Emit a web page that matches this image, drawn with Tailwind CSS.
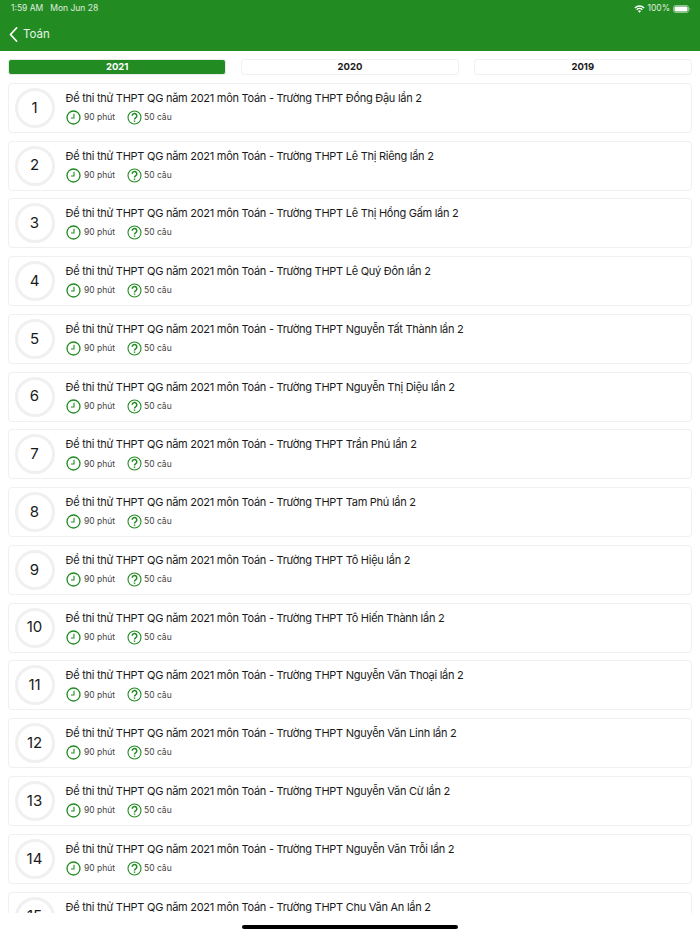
<!DOCTYPE html>
<html><head><meta charset="utf-8"><script src="https://cdn.jsdelivr.net/npm/@tailwindcss/browser@4"></script></head>
<body class="bg-white">
<svg class="hidden" width="0" height="0"><defs>
<symbol id="clock" viewBox="0 0 15 15"><circle cx="7.500" cy="7.500" r="6.500" fill="none" stroke="#228b22" stroke-width="1.300"/><path d="M8 3.800V8H5" fill="none" stroke="#228b22" stroke-width="1.100"/></symbol>
<symbol id="quest" viewBox="0 0 15 15"><circle cx="7.500" cy="7.500" r="6.500" fill="none" stroke="#228b22" stroke-width="1.100"/><path d="M5.200 5.800a2.300 2.300 0 1 1 3.600 1.900c-.9.600-1.300 1-1.300 1.900M7.500 10.400v1.400" fill="none" stroke="#228b22" stroke-width="1.500"/></symbol>
</defs></svg>
<div class="relative w-[700px] h-[934px] overflow-hidden bg-white font-['Inter','Liberation_Sans',sans-serif] text-[#1a1a1a]">
<header class="h-[51px] bg-[#228b22] text-white">
<div class="h-[17px] flex items-center justify-between pl-[11px] pr-[9px] text-[8.500px] text-white/85">
<div class="flex gap-[7px]"><span>1:59 AM</span><span>Mon Jun 28</span></div>
<div class="flex items-center gap-[2px]">
<svg class="w-[11px] h-[8px]" viewBox="0 0 12 9"><path d="M6 8.600 4.300 6.800a2.400 2.400 0 0 1 3.400 0zM3.300 5.800 2.300 4.700a5.200 5.200 0 0 1 7.400 0l-1 1.100a3.800 3.800 0 0 0-5.400 0zM1.300 3.800.3 2.700a8 8 0 0 1 11.400 0l-1 1.100a6.600 6.600 0 0 0-9.400 0z" fill="#fff"/></svg>
<span>100%</span>
<svg class="w-[18px] h-[8px] ml-[1px]" viewBox="0 0 18 8"><rect x=".5" y=".5" width="15" height="7" rx="2" fill="none" stroke="#fff" stroke-opacity=".5"/><rect x="1.500" y="1.500" width="13" height="5" rx="1" fill="#fff"/><path d="M16.500 2.500v3c.5-.2.9-.8.9-1.500s-.4-1.300-.9-1.500z" fill="#fff" fill-opacity=".5"/></svg>
</div>
</div>
<div class="h-[34px] flex items-center pl-[9px] gap-[5px]">
<svg class="w-[9px] h-[15px]" viewBox="0 0 9 15"><path d="M7.500 1 1.500 7.500l6 6.500" fill="none" stroke="#fff" stroke-width="1.800" stroke-linecap="round" stroke-linejoin="round"/></svg>
<span class="text-[11.500px] text-white/90 pt-[2px]">Toán</span>
</div>
</header>
<main class="h-[862px] overflow-hidden px-[8px]">
<nav class="flex gap-[14.500px] pt-[7.500px] pb-[8.300px]">
<div class="flex-1 h-[16px] rounded-[3px] bg-[#228b22] border border-[#e6ece6] flex items-center justify-center pt-[1.500px] text-[9.500px] font-bold text-white">2021</div>
<div class="flex-1 h-[16px] rounded-[3px] bg-white border-[1.500px] border-[#f1f1f1] flex items-center justify-center pt-[1.500px] text-[9.500px] font-bold">2020</div>
<div class="flex-1 h-[16px] rounded-[3px] bg-white border-[1.500px] border-[#f1f1f1] flex items-center justify-center pt-[1.500px] text-[9.500px] font-bold">2019</div>
</nav>
<ul class="flex flex-col gap-[7.770px]">
<li class="h-[50px] shrink-0 rounded-[4px] border-[1.500px] border-[#f0f0f0] flex items-center pl-[5.500px]"><div class="w-[40px] h-[40px] rounded-full border-[3px] border-[#f0f0f0] flex items-center justify-center text-[15px] shrink-0">1</div><div class="ml-[11px]"><p class="text-[11px] leading-[14px] tracking-[-0.27px] whitespace-nowrap">Đề thi thử THPT QG năm 2021 môn Toán - Trường THPT Đồng Đậu lần 2</p><div class="mt-[5px] flex items-center h-[15px] text-[8.500px] text-[#444]"><svg class="w-[15px] h-[15px]"><use href="#clock"/></svg><span class="ml-[3.500px] w-[42.500px]">90 phút</span><svg class="w-[15px] h-[15px]"><use href="#quest"/></svg><span class="ml-[2.500px]">50 câu</span></div></div></li>
<li class="h-[50px] shrink-0 rounded-[4px] border-[1.500px] border-[#f0f0f0] flex items-center pl-[5.500px]"><div class="w-[40px] h-[40px] rounded-full border-[3px] border-[#f0f0f0] flex items-center justify-center text-[15px] shrink-0">2</div><div class="ml-[11px]"><p class="text-[11px] leading-[14px] tracking-[-0.27px] whitespace-nowrap">Đề thi thử THPT QG năm 2021 môn Toán - Trường THPT Lê Thị Riêng lần 2</p><div class="mt-[5px] flex items-center h-[15px] text-[8.500px] text-[#444]"><svg class="w-[15px] h-[15px]"><use href="#clock"/></svg><span class="ml-[3.500px] w-[42.500px]">90 phút</span><svg class="w-[15px] h-[15px]"><use href="#quest"/></svg><span class="ml-[2.500px]">50 câu</span></div></div></li>
<li class="h-[50px] shrink-0 rounded-[4px] border-[1.500px] border-[#f0f0f0] flex items-center pl-[5.500px]"><div class="w-[40px] h-[40px] rounded-full border-[3px] border-[#f0f0f0] flex items-center justify-center text-[15px] shrink-0">3</div><div class="ml-[11px]"><p class="text-[11px] leading-[14px] tracking-[-0.27px] whitespace-nowrap">Đề thi thử THPT QG năm 2021 môn Toán - Trường THPT Lê Thị Hồng Gấm lần 2</p><div class="mt-[5px] flex items-center h-[15px] text-[8.500px] text-[#444]"><svg class="w-[15px] h-[15px]"><use href="#clock"/></svg><span class="ml-[3.500px] w-[42.500px]">90 phút</span><svg class="w-[15px] h-[15px]"><use href="#quest"/></svg><span class="ml-[2.500px]">50 câu</span></div></div></li>
<li class="h-[50px] shrink-0 rounded-[4px] border-[1.500px] border-[#f0f0f0] flex items-center pl-[5.500px]"><div class="w-[40px] h-[40px] rounded-full border-[3px] border-[#f0f0f0] flex items-center justify-center text-[15px] shrink-0">4</div><div class="ml-[11px]"><p class="text-[11px] leading-[14px] tracking-[-0.27px] whitespace-nowrap">Đề thi thử THPT QG năm 2021 môn Toán - Trường THPT Lê Quý Đôn lần 2</p><div class="mt-[5px] flex items-center h-[15px] text-[8.500px] text-[#444]"><svg class="w-[15px] h-[15px]"><use href="#clock"/></svg><span class="ml-[3.500px] w-[42.500px]">90 phút</span><svg class="w-[15px] h-[15px]"><use href="#quest"/></svg><span class="ml-[2.500px]">50 câu</span></div></div></li>
<li class="h-[50px] shrink-0 rounded-[4px] border-[1.500px] border-[#f0f0f0] flex items-center pl-[5.500px]"><div class="w-[40px] h-[40px] rounded-full border-[3px] border-[#f0f0f0] flex items-center justify-center text-[15px] shrink-0">5</div><div class="ml-[11px]"><p class="text-[11px] leading-[14px] tracking-[-0.27px] whitespace-nowrap">Đề thi thử THPT QG năm 2021 môn Toán - Trường THPT Nguyễn Tất Thành lần 2</p><div class="mt-[5px] flex items-center h-[15px] text-[8.500px] text-[#444]"><svg class="w-[15px] h-[15px]"><use href="#clock"/></svg><span class="ml-[3.500px] w-[42.500px]">90 phút</span><svg class="w-[15px] h-[15px]"><use href="#quest"/></svg><span class="ml-[2.500px]">50 câu</span></div></div></li>
<li class="h-[50px] shrink-0 rounded-[4px] border-[1.500px] border-[#f0f0f0] flex items-center pl-[5.500px]"><div class="w-[40px] h-[40px] rounded-full border-[3px] border-[#f0f0f0] flex items-center justify-center text-[15px] shrink-0">6</div><div class="ml-[11px]"><p class="text-[11px] leading-[14px] tracking-[-0.27px] whitespace-nowrap">Đề thi thử THPT QG năm 2021 môn Toán - Trường THPT Nguyễn Thị Diệu lần 2</p><div class="mt-[5px] flex items-center h-[15px] text-[8.500px] text-[#444]"><svg class="w-[15px] h-[15px]"><use href="#clock"/></svg><span class="ml-[3.500px] w-[42.500px]">90 phút</span><svg class="w-[15px] h-[15px]"><use href="#quest"/></svg><span class="ml-[2.500px]">50 câu</span></div></div></li>
<li class="h-[50px] shrink-0 rounded-[4px] border-[1.500px] border-[#f0f0f0] flex items-center pl-[5.500px]"><div class="w-[40px] h-[40px] rounded-full border-[3px] border-[#f0f0f0] flex items-center justify-center text-[15px] shrink-0">7</div><div class="ml-[11px]"><p class="text-[11px] leading-[14px] tracking-[-0.27px] whitespace-nowrap">Đề thi thử THPT QG năm 2021 môn Toán - Trường THPT Trần Phú lần 2</p><div class="mt-[5px] flex items-center h-[15px] text-[8.500px] text-[#444]"><svg class="w-[15px] h-[15px]"><use href="#clock"/></svg><span class="ml-[3.500px] w-[42.500px]">90 phút</span><svg class="w-[15px] h-[15px]"><use href="#quest"/></svg><span class="ml-[2.500px]">50 câu</span></div></div></li>
<li class="h-[50px] shrink-0 rounded-[4px] border-[1.500px] border-[#f0f0f0] flex items-center pl-[5.500px]"><div class="w-[40px] h-[40px] rounded-full border-[3px] border-[#f0f0f0] flex items-center justify-center text-[15px] shrink-0">8</div><div class="ml-[11px]"><p class="text-[11px] leading-[14px] tracking-[-0.27px] whitespace-nowrap">Đề thi thử THPT QG năm 2021 môn Toán - Trường THPT Tam Phú lần 2</p><div class="mt-[5px] flex items-center h-[15px] text-[8.500px] text-[#444]"><svg class="w-[15px] h-[15px]"><use href="#clock"/></svg><span class="ml-[3.500px] w-[42.500px]">90 phút</span><svg class="w-[15px] h-[15px]"><use href="#quest"/></svg><span class="ml-[2.500px]">50 câu</span></div></div></li>
<li class="h-[50px] shrink-0 rounded-[4px] border-[1.500px] border-[#f0f0f0] flex items-center pl-[5.500px]"><div class="w-[40px] h-[40px] rounded-full border-[3px] border-[#f0f0f0] flex items-center justify-center text-[15px] shrink-0">9</div><div class="ml-[11px]"><p class="text-[11px] leading-[14px] tracking-[-0.27px] whitespace-nowrap">Đề thi thử THPT QG năm 2021 môn Toán - Trường THPT Tô Hiệu lần 2</p><div class="mt-[5px] flex items-center h-[15px] text-[8.500px] text-[#444]"><svg class="w-[15px] h-[15px]"><use href="#clock"/></svg><span class="ml-[3.500px] w-[42.500px]">90 phút</span><svg class="w-[15px] h-[15px]"><use href="#quest"/></svg><span class="ml-[2.500px]">50 câu</span></div></div></li>
<li class="h-[50px] shrink-0 rounded-[4px] border-[1.500px] border-[#f0f0f0] flex items-center pl-[5.500px]"><div class="w-[40px] h-[40px] rounded-full border-[3px] border-[#f0f0f0] flex items-center justify-center text-[15px] shrink-0">10</div><div class="ml-[11px]"><p class="text-[11px] leading-[14px] tracking-[-0.27px] whitespace-nowrap">Đề thi thử THPT QG năm 2021 môn Toán - Trường THPT Tô Hiến Thành lần 2</p><div class="mt-[5px] flex items-center h-[15px] text-[8.500px] text-[#444]"><svg class="w-[15px] h-[15px]"><use href="#clock"/></svg><span class="ml-[3.500px] w-[42.500px]">90 phút</span><svg class="w-[15px] h-[15px]"><use href="#quest"/></svg><span class="ml-[2.500px]">50 câu</span></div></div></li>
<li class="h-[50px] shrink-0 rounded-[4px] border-[1.500px] border-[#f0f0f0] flex items-center pl-[5.500px]"><div class="w-[40px] h-[40px] rounded-full border-[3px] border-[#f0f0f0] flex items-center justify-center text-[15px] shrink-0">11</div><div class="ml-[11px]"><p class="text-[11px] leading-[14px] tracking-[-0.27px] whitespace-nowrap">Đề thi thử THPT QG năm 2021 môn Toán - Trường THPT Nguyễn Văn Thoại lần 2</p><div class="mt-[5px] flex items-center h-[15px] text-[8.500px] text-[#444]"><svg class="w-[15px] h-[15px]"><use href="#clock"/></svg><span class="ml-[3.500px] w-[42.500px]">90 phút</span><svg class="w-[15px] h-[15px]"><use href="#quest"/></svg><span class="ml-[2.500px]">50 câu</span></div></div></li>
<li class="h-[50px] shrink-0 rounded-[4px] border-[1.500px] border-[#f0f0f0] flex items-center pl-[5.500px]"><div class="w-[40px] h-[40px] rounded-full border-[3px] border-[#f0f0f0] flex items-center justify-center text-[15px] shrink-0">12</div><div class="ml-[11px]"><p class="text-[11px] leading-[14px] tracking-[-0.27px] whitespace-nowrap">Đề thi thử THPT QG năm 2021 môn Toán - Trường THPT Nguyễn Văn Linh lần 2</p><div class="mt-[5px] flex items-center h-[15px] text-[8.500px] text-[#444]"><svg class="w-[15px] h-[15px]"><use href="#clock"/></svg><span class="ml-[3.500px] w-[42.500px]">90 phút</span><svg class="w-[15px] h-[15px]"><use href="#quest"/></svg><span class="ml-[2.500px]">50 câu</span></div></div></li>
<li class="h-[50px] shrink-0 rounded-[4px] border-[1.500px] border-[#f0f0f0] flex items-center pl-[5.500px]"><div class="w-[40px] h-[40px] rounded-full border-[3px] border-[#f0f0f0] flex items-center justify-center text-[15px] shrink-0">13</div><div class="ml-[11px]"><p class="text-[11px] leading-[14px] tracking-[-0.27px] whitespace-nowrap">Đề thi thử THPT QG năm 2021 môn Toán - Trường THPT Nguyễn Văn Cừ lần 2</p><div class="mt-[5px] flex items-center h-[15px] text-[8.500px] text-[#444]"><svg class="w-[15px] h-[15px]"><use href="#clock"/></svg><span class="ml-[3.500px] w-[42.500px]">90 phút</span><svg class="w-[15px] h-[15px]"><use href="#quest"/></svg><span class="ml-[2.500px]">50 câu</span></div></div></li>
<li class="h-[50px] shrink-0 rounded-[4px] border-[1.500px] border-[#f0f0f0] flex items-center pl-[5.500px]"><div class="w-[40px] h-[40px] rounded-full border-[3px] border-[#f0f0f0] flex items-center justify-center text-[15px] shrink-0">14</div><div class="ml-[11px]"><p class="text-[11px] leading-[14px] tracking-[-0.27px] whitespace-nowrap">Đề thi thử THPT QG năm 2021 môn Toán - Trường THPT Nguyễn Văn Trỗi lần 2</p><div class="mt-[5px] flex items-center h-[15px] text-[8.500px] text-[#444]"><svg class="w-[15px] h-[15px]"><use href="#clock"/></svg><span class="ml-[3.500px] w-[42.500px]">90 phút</span><svg class="w-[15px] h-[15px]"><use href="#quest"/></svg><span class="ml-[2.500px]">50 câu</span></div></div></li>
<li class="h-[50px] shrink-0 rounded-[4px] border-[1.500px] border-[#f0f0f0] flex items-center pl-[5.500px]"><div class="w-[40px] h-[40px] rounded-full border-[3px] border-[#f0f0f0] flex items-center justify-center text-[15px] shrink-0">15</div><div class="ml-[11px]"><p class="text-[11px] leading-[14px] tracking-[-0.27px] whitespace-nowrap">Đề thi thử THPT QG năm 2021 môn Toán - Trường THPT Chu Văn An lần 2</p><div class="mt-[5px] flex items-center h-[15px] text-[8.500px] text-[#444]"><svg class="w-[15px] h-[15px]"><use href="#clock"/></svg><span class="ml-[3.500px] w-[42.500px]">90 phút</span><svg class="w-[15px] h-[15px]"><use href="#quest"/></svg><span class="ml-[2.500px]">50 câu</span></div></div></li>
</ul>
</main>
<div class="absolute left-[242px] top-[925px] w-[216px] h-[4px] rounded-full bg-black"></div>
</div>
</body></html>
